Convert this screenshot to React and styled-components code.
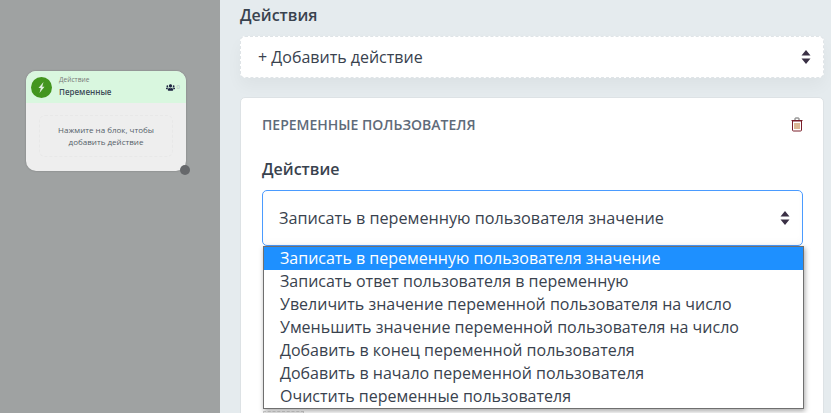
import React from "react";
import styled, { createGlobalStyle } from "styled-components";
import { FaUsers } from "react-icons/fa";

const GlobalStyle = createGlobalStyle`
  html, body {
    margin: 0;
    padding: 0;
    height: 100%;
    overflow: hidden;
    font-family: "Open Sans", "Liberation Sans", sans-serif;
  }
`;

const Page = styled.div`
  display: flex;
  width: 831px;
  height: 413px;
  overflow: hidden;
`;

const Canvas = styled.div`
  flex: 0 0 220px;
  background: #9fa2a2;
  padding: 71px 0 0 26px;
  box-sizing: border-box;
`;

const Node = styled.div`
  position: relative;
  width: 160px;
  height: 100px;
  background: #eeeeee;
  border-radius: 10px;
  box-shadow: 0 0 2px rgba(0, 0, 0, 0.25);
`;

const NodeHeader = styled.div`
  display: flex;
  align-items: center;
  height: 32px;
  padding: 0 6px 0 5px;
  background: #d9f7df;
  border-radius: 10px 10px 0 0;
`;

const NodeIcon = styled.div`
  display: flex;
  align-items: center;
  justify-content: center;
  width: 21px;
  height: 21px;
  border-radius: 50%;
  background: #43951f;
  margin-right: 7px;
`;

const NodeTitles = styled.div`
  flex: 1;
  display: flex;
  flex-direction: column;
`;

const NodeKind = styled.span`
  font-size: 6.6px;
  line-height: 9px;
  color: #777;
`;

const NodeName = styled.span`
  font-size: 8px;
  line-height: 15px;
  color: #3d4b57;
  font-weight: 600;
`;

const NodeCount = styled.span`
  display: flex;
  align-items: center;
  gap: 2px;
  font-size: 6px;
  color: #a9b4b8;
`;

const NodeHint = styled.div`
  margin: 12px 13px 0;
  height: 42px;
  border: 1px dashed #e8e8e8;
  border-radius: 6px;
  display: flex;
  align-items: center;
  justify-content: center;
  text-align: center;
  font-size: 8px;
  line-height: 12px;
  color: #555f69;
  box-sizing: border-box;
`;

const NodePort = styled.div`
  position: absolute;
  right: -4px;
  bottom: -4px;
  width: 10px;
  height: 10px;
  border-radius: 50%;
  background: #66686b;
`;

const Panel = styled.div`
  flex: 1;
  background: #e5ebee;
  padding: 4px 7px 0 20px;
  box-sizing: border-box;
`;

const SectionTitle = styled.div`
  font-size: 16px;
  line-height: 22px;
  font-weight: 600;
  color: #39424e;
  margin-bottom: 10px;
`;

const AddBar = styled.div`
  display: flex;
  align-items: center;
  justify-content: space-between;
  height: 42px;
  padding: 0 11px 0 17px;
  background: #fff;
  border: 1px dashed #dfe4e7;
  border-radius: 5px;
  box-shadow: 0 8px 16px rgba(0, 0, 0, 0.04);
  font-size: 16px;
  color: #39424e;
  box-sizing: border-box;
  margin-bottom: 19px;
`;

const Card = styled.div`
  background: #fff;
  border: 1px solid #dde2e5;
  border-radius: 5px;
  padding: 0 20px 0 21px;
  height: 330px;
  box-sizing: border-box;
`;

const CardHeader = styled.div`
  display: flex;
  align-items: center;
  justify-content: space-between;
  height: 52px;
`;

const CardTitle = styled.span`
  font-size: 14px;
  font-weight: 600;
  color: #5f6b7a;
`;

const FieldLabel = styled.div`
  font-size: 16px;
  line-height: 22px;
  font-weight: 600;
  color: #39424e;
  margin: 8px 0 10px;
`;

const SelectWrap = styled.div`
  position: relative;
`;

const SelectBox = styled.div`
  display: flex;
  align-items: center;
  justify-content: space-between;
  height: 56px;
  padding: 0 11px 0 16px;
  border: 1px solid #4a9bff;
  border-radius: 5px;
  box-shadow: inset 0 -4px 6px rgba(0, 0, 0, 0.02);
  font-size: 16.2px;
  color: #39424e;
  box-sizing: border-box;
`;

const Menu = styled.ul`
  position: absolute;
  top: 56px;
  left: 1px;
  width: 541px;
  margin: 0;
  padding: 0;
  list-style: none;
  background: #fff;
  border: 1px solid #6f6f6f;
  box-shadow: 1px 2px 5px rgba(0, 0, 0, 0.35);
  box-sizing: border-box;
  z-index: 2;
`;

const MenuItem = styled.li`
  height: 23px;
  line-height: 23px;
  padding-left: 16px;
  font-size: 16px;
  white-space: nowrap;
  color: ${({ $active }) => ($active ? "#fff" : "#39424e")};
  background: ${({ $active }) => ($active ? "#1e90ff" : "transparent")};
`;

const CoveredButton = styled.div`
  width: 41px;
  height: 20px;
  margin: 165px 0 0 1px;
  background: #eeeeee;
  border: 1px dashed #cfcfcf;
  box-sizing: border-box;
`;

const UpDown = () => (
  <svg width="12" height="16" viewBox="0 0 12 16">
    <path d="M6 1 L10.5 6.5 H1.5 Z M6 15 L1.5 9.5 H10.5 Z" fill="#3a3045" />
  </svg>
);

const Trash = () => (
  <svg width="12" height="15" viewBox="0 0 12 15" fill="none">
    <path d="M1.5 4 H10.5 V13 Q10.5 14 9.5 14 H2.5 Q1.5 14 1.5 13 Z M0.5 3.5 H11.5" stroke="#7a1f2a" strokeWidth="1" />
    <path d="M4 3 V1.5 Q4 1 4.5 1 H7.5 Q8 1 8 1.5 V3" stroke="#666" strokeWidth="1" />
    <path d="M4 6 V12 M6 6 V12 M8 6 V12" stroke="#b8702a" strokeWidth="1" />
  </svg>
);

const Bolt = () => (
  <svg width="9" height="11" viewBox="0 0 9 11">
    <path d="M6.5 0 L1.5 6 H3.8 L2.5 11 L7.5 4.8 H5.2 Z" fill="#dfeede" />
  </svg>
);

const options = [
  "Записать в переменную пользователя значение",
  "Записать ответ пользователя в переменную",
  "Увеличить значение переменной пользователя на число",
  "Уменьшить значение переменной пользователя на число",
  "Добавить в конец переменной пользователя",
  "Добавить в начало переменной пользователя",
  "Очистить переменные пользователя",
];

export default function App() {
  return (
    <>
      <GlobalStyle />
      <Page>
        <Canvas>
          <Node>
            <NodeHeader>
              <NodeIcon>
                <Bolt />
              </NodeIcon>
              <NodeTitles>
                <NodeKind>Действие</NodeKind>
                <NodeName>Переменные</NodeName>
              </NodeTitles>
              <NodeCount>
                <FaUsers size={9} color="#1c2340" />0
              </NodeCount>
            </NodeHeader>
            <NodeHint>
              <span>
                Нажмите на блок, чтобы
                <br />
                добавить действие
              </span>
            </NodeHint>
            <NodePort />
          </Node>
        </Canvas>
        <Panel>
          <SectionTitle>Действия</SectionTitle>
          <AddBar>
            + Добавить действие
            <UpDown />
          </AddBar>
          <Card>
            <CardHeader>
              <CardTitle>ПЕРЕМЕННЫЕ ПОЛЬЗОВАТЕЛЯ</CardTitle>
              <Trash />
            </CardHeader>
            <FieldLabel>Действие</FieldLabel>
            <SelectWrap>
              <SelectBox>
                {options[0]}
                <UpDown />
              </SelectBox>
              <Menu>
                {options.map((o, i) => (
                  <MenuItem key={o} $active={i === 0}>
                    {o}
                  </MenuItem>
                ))}
              </Menu>
              <CoveredButton />
            </SelectWrap>
          </Card>
        </Panel>
      </Page>
    </>
  );
}
